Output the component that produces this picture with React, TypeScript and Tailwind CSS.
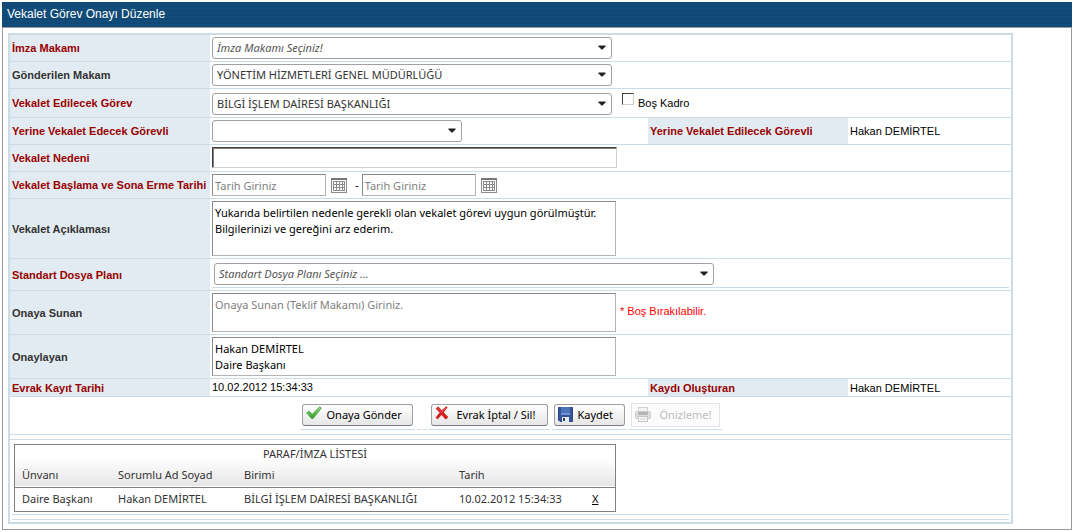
import { ReactNode } from "react";

// Shared class names for the form controls
const inputClass = "border border-[#8a8a8a] border-b-[#b4b4b4] border-r-[#b4b4b4] bg-white px-0.5 text-black placeholder:text-[#808080] placeholder:opacity-100 outline-none";
const textareaClass = `${inputClass} block w-[404px] resize-none overflow-hidden py-[3px] font-['Noto_Sans',sans-serif] text-[11px] leading-4`;

interface ILabelProps {
  children: ReactNode;
  htmlFor?: string;
  required?: boolean; // required fields have a dark red label
}

function FieldLabel({ children, htmlFor, required }: ILabelProps) {
  const className = `flex w-[200px] shrink-0 items-center whitespace-nowrap bg-[#e3ebf2] pl-0.5 font-bold ${
    required ? "text-[#990000]" : "text-[#333333]"
  }`;
  return htmlFor ? (
    <label htmlFor={htmlFor} className={className}>{children}</label>
  ) : (
    <div className={className}>{children}</div>
  );
}

interface IRowProps extends ILabelProps {
  label: string;
  extra?: ReactNode; // second label / value pair on the right side
}

function FormRow({ label, htmlFor, required, children, extra }: IRowProps) {
  return (
    <div className="flex border-b border-[#cbdce6]">
      <FieldLabel htmlFor={htmlFor} required={required}>{label}</FieldLabel>
      <div className="flex min-w-0 flex-1 items-center px-0.5 py-0.5">{children}</div>
      {extra}
    </div>
  );
}

interface ISideFieldProps {
  label: string;
  value: string;
}

function SideField({ label, value }: ISideFieldProps) {
  return (
    <>
      <FieldLabel required>{label}</FieldLabel>
      <div className="flex w-[163px] shrink-0 items-center px-0.5">{value}</div>
    </>
  );
}

interface IComboProps {
  id: string;
  text: string;
  width: string;
  placeholder?: boolean;
}

function Combo({ id, text, width, placeholder }: IComboProps) {
  return (
    <div className={`relative ${width}`}>
      <select
        id={id}
        className={`block h-[22px] w-full appearance-none rounded-[3px] border border-[#a0a0a0] bg-white pl-1 pr-6 font-['Noto_Sans',sans-serif] text-[11px] outline-none ${
          placeholder ? "italic text-[#555555]" : "text-[#333333]"
        }`}
      >
        <option>{text}</option>
      </select>
      <svg className="pointer-events-none absolute right-1.5 top-2 h-[5px] w-2" viewBox="0 0 8 5">
        <path d="M0.5 0.5h7v1L4.5 4.5h-1L0.5 1.5z" fill="#222222" />
      </svg>
    </div>
  );
}

function CalendarIcon() {
  return (
    <svg width="16" height="15" viewBox="0 0 16 15">
      <rect x="0.5" y="0.5" width="15" height="14" fill="#ffffff" stroke="#8c8c8c" />
      <rect width="16" height="2" fill="#777777" />
      <rect x="2" y="3" width="12" height="10" fill="#8c8c8c" />
      {[4, 7, 10].map((y) =>
        [3, 6, 9, 12].map((x) => (
          <rect key={`${x}-${y}`} x={x} y={y} width={x === 12 ? 1 : 2} height="2" fill="#ffffff" />
        ))
      )}
    </svg>
  );
}

interface IDateProps {
  id: string;
  label: string;
}

function DateField({ id, label }: IDateProps) {
  return (
    <div className="flex items-center">
      <input id={id} aria-label={label} placeholder="Tarih Giriniz" className={`${inputClass} h-[22px] w-[114px] font-['Noto_Sans',sans-serif] text-[11px]`} />
      <button type="button" aria-label="Takvim" className="ml-[5px]">
        <CalendarIcon />
      </button>
    </div>
  );
}

function CheckIcon() {
  return (
    <svg className="mb-1" width="16" height="14" viewBox="0 0 16 14">
      <defs>
        <linearGradient id="check" x1="0" y1="0" x2="0" y2="1">
          <stop offset="0" stopColor="#9be08a" />
          <stop offset="1" stopColor="#2c9a22" />
        </linearGradient>
      </defs>
      <path d="M0.7 6.8L3.2 5.2l3 3.2L13.6 0.8l1.7 1.4L7 12.6H5.6z" fill="url(#check)" stroke="#3f9636" strokeWidth="0.8" />
    </svg>
  );
}

function CrossIcon() {
  return (
    <svg className="mb-1" width="14" height="14" viewBox="0 0 14 14">
      <path d="M1 2.6L3.2 0.8l3.6 4 4.4-4.2 1 0.8-3.8 5L13 11.2l-2.4 2L6.6 8.6l-4 4.4L1 11.6l3.9-5z" fill="#dc1717" stroke="#b50d0d" strokeWidth="0.5" />
      <path d="M2.6 2l4.2 4.6L11 1.8" fill="none" stroke="#f06a60" strokeWidth="0.8" />
    </svg>
  );
}

function DiskIcon() {
  return (
    <svg className="mb-0.5" width="15" height="15" viewBox="0 0 15 15">
      <path d="M0.5 0.5h14v14H2L0.5 13z" fill="#34549c" stroke="#2d4784" />
      <rect x="3" y="0" width="9" height="8" fill="#4c72b8" />
      <rect x="3" y="6" width="9" height="2" fill="#6f92d0" />
      <rect x="4" y="10" width="7" height="5" fill="#e8ebf2" />
      <rect x="5" y="11" width="2" height="3" fill="#2b3f6f" />
    </svg>
  );
}

function PrinterIcon() {
  return (
    <svg width="16" height="16" viewBox="0 0 16 16">
      <rect x="3.5" y="0.5" width="9" height="5" fill="#f5f5f5" stroke="#cfcfcf" />
      <rect x="0.5" y="4.5" width="15" height="7" rx="1" fill="#dedede" stroke="#cccccc" />
      <rect x="3" y="5" width="10" height="3" fill="#b5b5b5" />
      <rect x="3.5" y="9.5" width="9" height="5" fill="#f8f8f8" stroke="#c4c4c4" />
      <path d="M5 12h6" stroke="#cfcfcf" />
    </svg>
  );
}

interface IActionProps {
  icon: ReactNode;
  text: string;
  width: string;
  gap?: string;
  disabled?: boolean;
}

function ActionButton({ icon, text, width, gap = "gap-1", disabled }: IActionProps) {
  return (
    <div className="flex h-[27px] items-center border-b border-[#cbdce6] px-0.5 pb-0.5">
      <button
        type="button"
        disabled={disabled}
        className={`flex items-center whitespace-nowrap border pl-[3px] font-['Noto_Sans',sans-serif] text-[11px] ${gap} ${width} ${
          disabled
            ? "h-6 border-[#e4e4e4] bg-[#fcfcfc] text-[#bdbdbd]"
            : "h-[22px] rounded-[3px] border-[#a0a0a0] border-b-[#7d7d7d] bg-linear-to-b from-white to-[#e6e6e6] text-black"
        }`}
      >
        {icon}
        <span>{text}</span>
      </button>
    </div>
  );
}

const signers = [
  { title: "Daire Başkanı", name: "Hakan DEMİRTEL", unit: "BİLGİ İŞLEM DAİRESİ BAŞKANLIĞI", date: "10.02.2012 15:34:33" },
];

function SignerTable() {
  return (
    <div className="w-[602px] border border-[#808080] font-['Noto_Sans',sans-serif] text-[11px] text-[#333333]">
      <table className="w-full table-fixed border-collapse text-left">
        <colgroup>
          <col className="w-[95px]" />
          <col className="w-[127px]" />
          <col className="w-[214px]" />
          <col className="w-[133px]" />
          <col />
        </colgroup>
        <thead className="border-b border-[#808080] bg-linear-to-b from-white from-30% to-[#e6e6e6]">
          <tr className="h-[18px]">
            <th colSpan={5} className="p-0 text-center font-normal leading-4">PARAF/İMZA LİSTESİ</th>
          </tr>
          <tr className="h-6">
            <th className="p-0 pl-[7px] font-normal">Ünvanı</th>
            <th className="p-0 pl-2 font-normal">Sorumlu Ad Soyad</th>
            <th className="p-0 pl-[7px] font-normal">Birimi</th>
            <th className="p-0 pl-2 font-normal">Tarih</th>
            <th className="p-0" />
          </tr>
        </thead>
        <tbody>
          {signers.map((signer) => (
            <tr key={signer.title} className="h-6 whitespace-nowrap">
              <td className="p-0 pl-[7px]">{signer.title}</td>
              <td className="p-0 pl-2">{signer.name}</td>
              <td className="p-0 pl-[7px]">{signer.unit}</td>
              <td className="p-0 pl-2">{signer.date}</td>
              <td className="p-0 pl-2">
                <a href="#" className="text-black underline">X</a>
              </td>
            </tr>
          ))}
        </tbody>
      </table>
    </div>
  );
}

export default function App() {
  return (
    <div className="bg-white px-0.5 pt-0.5 font-['Liberation_Sans',Arial,sans-serif] text-[11px] leading-4 text-black">
      <h1 className="h-[25px] bg-[#104a78] bg-[repeating-linear-gradient(to_bottom,#104976_0px,#104976_2px,#124c7a_2px,#124c7a_4px)] pl-[5px] text-xs leading-6 text-white">
        Vekalet Görev Onayı Düzenle
      </h1>

      <div className="border border-[#999999] pb-[5px] pl-[5px] pr-[58px] pt-[5px]">
        <form className="border-2 border-[#cbdce6]" onSubmit={(e) => e.preventDefault()}>
          <FormRow label="İmza Makamı" htmlFor="imza" required>
            <Combo id="imza" text="İmza Makamı Seçiniz!" width="w-[400px]" placeholder />
          </FormRow>
          <FormRow label="Gönderilen Makam" htmlFor="makam">
            <Combo id="makam" text="YÖNETİM HİZMETLERİ GENEL MÜDÜRLÜĞÜ" width="w-[400px]" />
          </FormRow>
          <FormRow label="Vekalet Edilecek Görev" htmlFor="gorev" required>
            <div className="flex items-center gap-2.5 pt-0.5">
              <Combo id="gorev" text="BİLGİ İŞLEM DAİRESİ BAŞKANLIĞI" width="w-[400px]" />
              <label className="flex items-start gap-1 whitespace-nowrap pb-1">
                <input type="checkbox" className="h-3 w-3 appearance-none border border-b-[#d4d0c8] border-l-[#404040] border-r-[#d4d0c8] border-t-[#404040] bg-white" />
                <span className="pt-0.5">Boş Kadro</span>
              </label>
            </div>
          </FormRow>
          <FormRow
            label="Yerine Vekalet Edecek Görevli"
            htmlFor="vekil"
            required
            extra={<SideField label="Yerine Vekalet Edilecek Görevli" value="Hakan DEMİRTEL" />}
          >
            <Combo id="vekil" text="" width="w-[250px]" />
          </FormRow>
          <FormRow label="Vekalet Nedeni" htmlFor="neden" required>
            <div className="pb-px">
              <input id="neden" className="block h-[21px] w-[405px] border border-b-[#d4d0c8] border-l-[#404040] border-r-[#d4d0c8] border-t-[#404040] bg-white px-0.5 shadow-[inset_1px_1px_0_#808080] outline-none" />
            </div>
          </FormRow>
          <FormRow label="Vekalet Başlama ve Sona Erme Tarihi" htmlFor="baslama" required>
            <DateField id="baslama" label="Başlama Tarihi" />
            <span className="px-2 pr-[3px]">-</span>
            <DateField id="bitis" label="Sona Erme Tarihi" />
          </FormRow>
          <FormRow label="Vekalet Açıklaması" htmlFor="aciklama">
            <textarea
              id="aciklama"
              className={`${textareaClass} h-[55px]`}
              defaultValue={"Yukarıda belirtilen nedenle gerekli olan vekalet görevi uygun görülmüştür.\nBilgilerinizi ve gereğini arz ederim."}
            />
          </FormRow>
          <FormRow label="Standart Dosya Planı" htmlFor="plan" required>
            <div className="w-full border-b border-[#cbdce6] px-0.5 py-0.5">
              <Combo id="plan" text="Standart Dosya Planı Seçiniz ..." width="w-[500px]" placeholder />
            </div>
          </FormRow>
          <FormRow label="Onaya Sunan" htmlFor="sunan">
            <textarea id="sunan" placeholder="Onaya Sunan (Teklif Makamı) Giriniz." className={`${textareaClass} h-[39px]`} />
            <span className="pb-1 pl-1 text-[#ff0000]">* Boş Bırakılabilir.</span>
          </FormRow>
          <FormRow label="Onaylayan" htmlFor="onaylayan">
            <textarea id="onaylayan" className={`${textareaClass} h-[39px]`} defaultValue={"Hakan DEMİRTEL\nDaire Başkanı"} />
          </FormRow>
          <FormRow label="Evrak Kayıt Tarihi" required extra={<SideField label="Kaydı Oluşturan" value="Hakan DEMİRTEL" />}>
            <span className="leading-[13px]">10.02.2012 15:34:33</span>
          </FormRow>

          {/* Form actions */}
          <div className="flex justify-center gap-0.5 border-b border-[#cbdce6] pb-1 pt-1.5">
            <ActionButton icon={<CheckIcon />} text="Onaya Gönder" width="w-[111px]" gap="gap-[5px]" />
            <div className="w-1 border-b border-[#cbdce6]" />
            <div className="w-1 border-b border-[#cbdce6]" />
            <ActionButton icon={<CrossIcon />} text="Evrak İptal / Sil!" width="w-[117px]" gap="gap-2" />
            <ActionButton icon={<DiskIcon />} text="Kaydet" width="w-[71px]" gap="gap-[5px]" />
            <ActionButton icon={<PrinterIcon />} text="Önizleme!" width="w-[89px]" gap="gap-[9px]" disabled />
          </div>
          <div className="h-[5px] border-b border-[#cbdce6]" />

          {/* Signature list */}
          <div className="px-0.5 pb-0.5 pt-0.5">
            <div className="border-b border-[#cbdce6] px-0.5 py-0.5">
              <SignerTable />
            </div>
            <div className="h-[5px] border-b border-[#cbdce6]" />
          </div>
        </form>
      </div>
    </div>
  );
}
